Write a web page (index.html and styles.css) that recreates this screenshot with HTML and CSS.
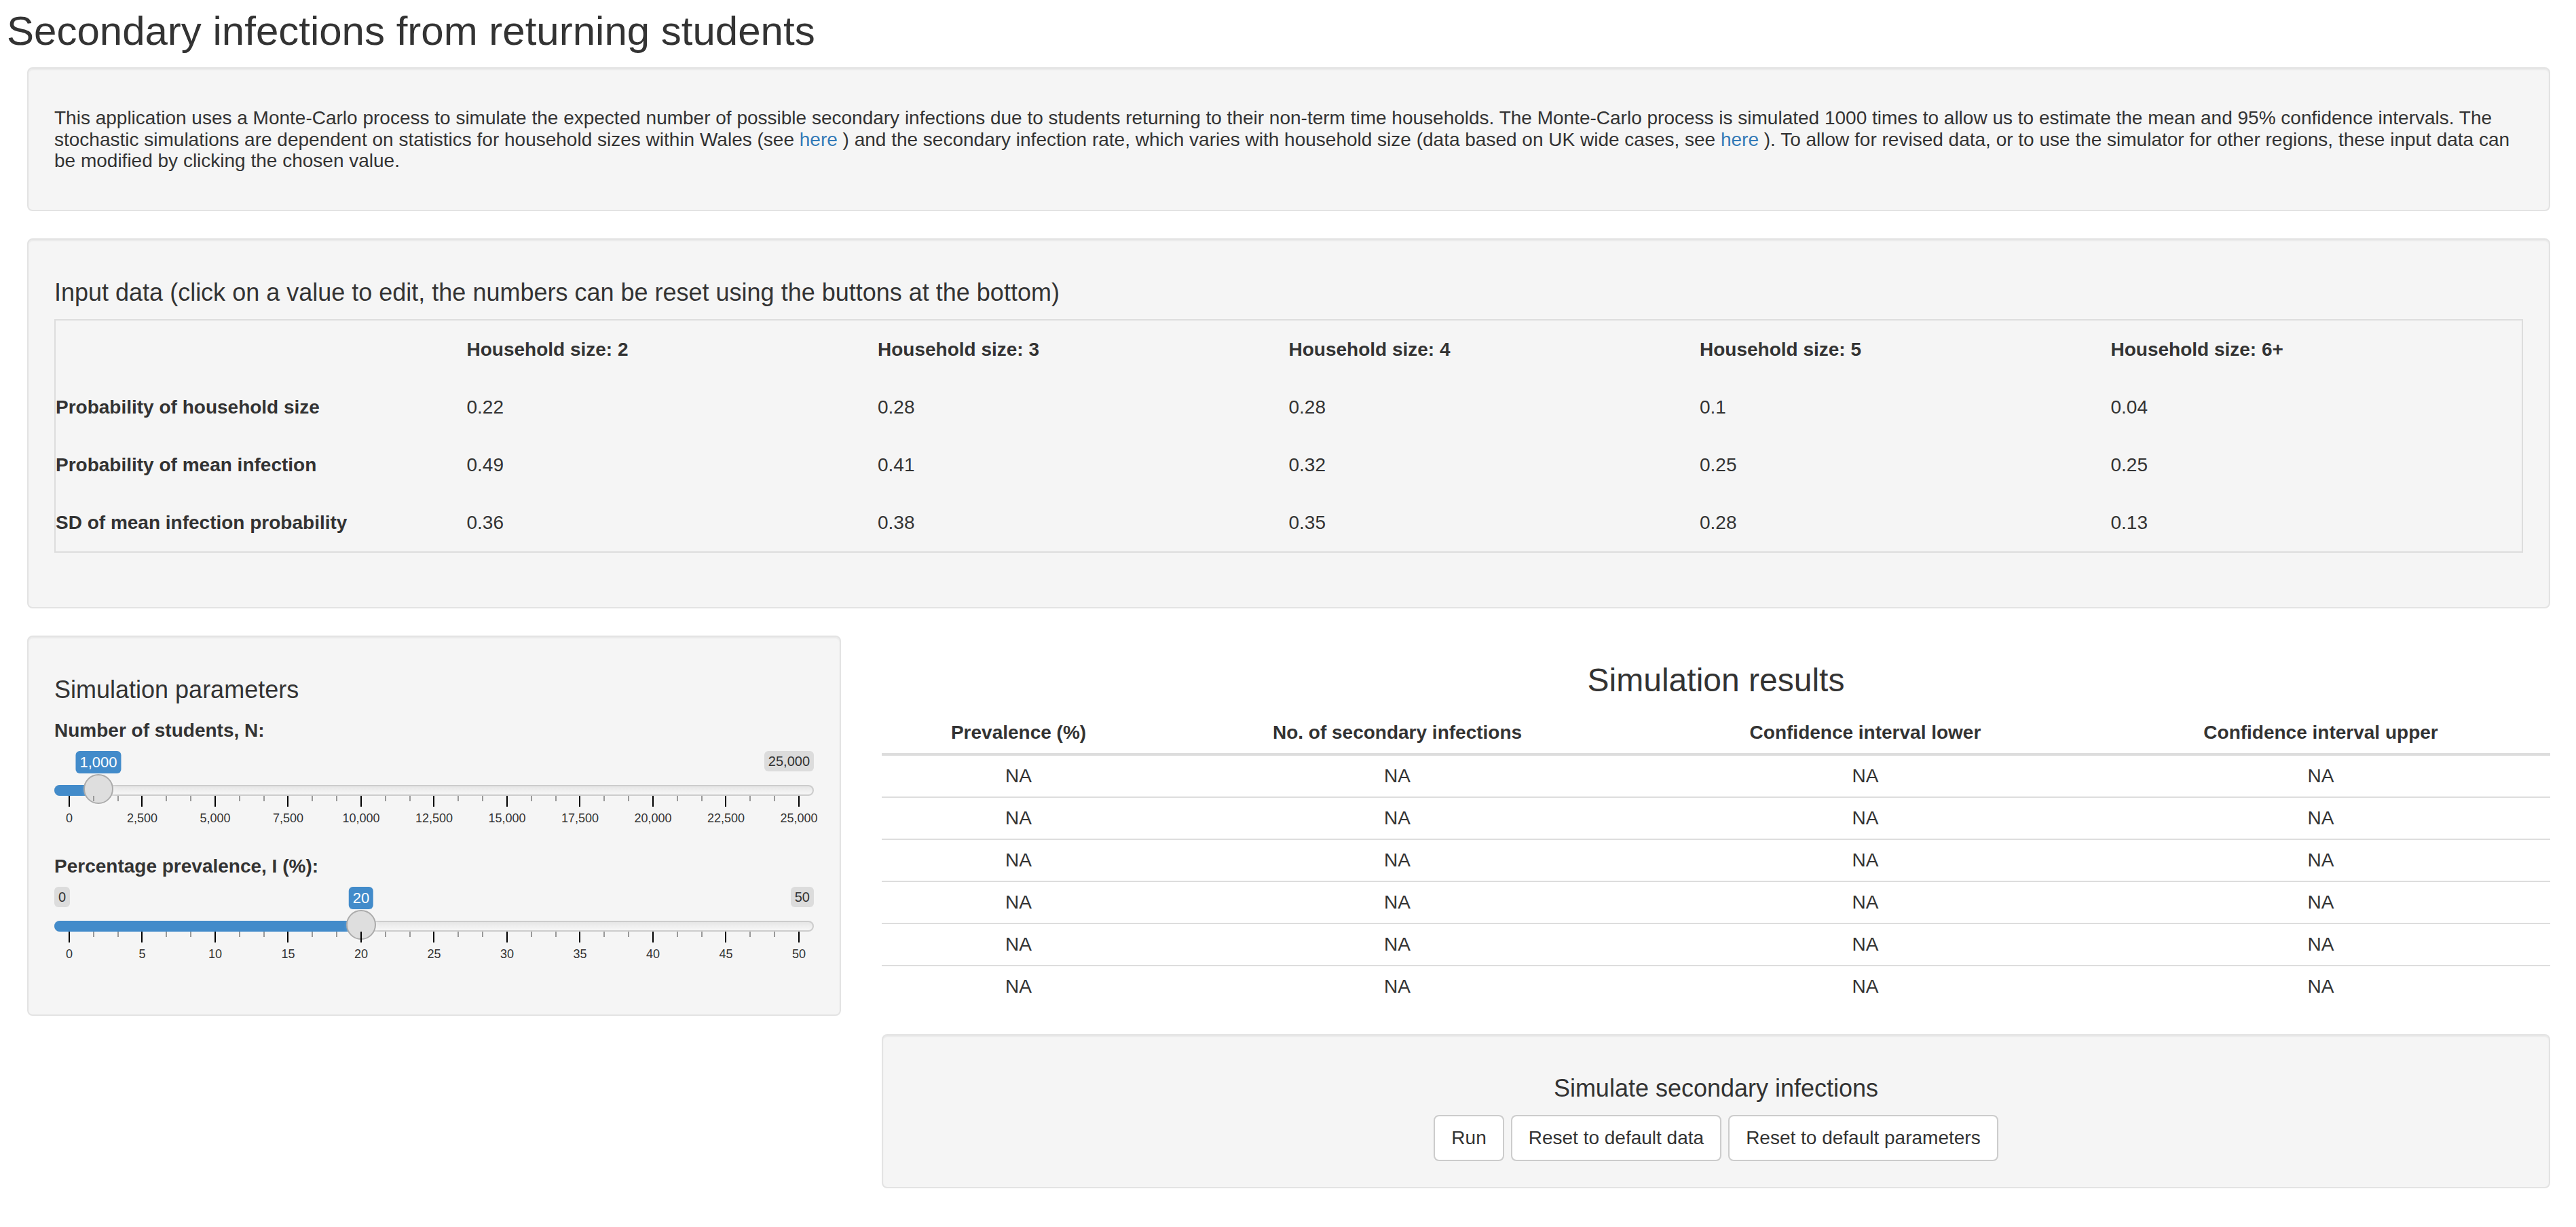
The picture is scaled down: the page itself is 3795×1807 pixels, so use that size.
FILE: index.html
```html
<!DOCTYPE html>
<html lang="en">
<head>
<meta charset="utf-8">
<title>Secondary infections from returning students</title>
<link rel="stylesheet" href="styles.css">
</head>
<body>
<div class="page">
  <h2 class="title">Secondary infections from returning students</h2>
  <div class="full">
    <div class="well">
      <h5 class="intro">This application uses a Monte-Carlo process to simulate the expected number of possible secondary infections due to students returning to their non-term time households. The Monte-Carlo process is simulated 1000 times to allow us to estimate the mean and 95% confidence intervals. The stochastic simulations are dependent on statistics for household sizes within Wales (see <a href="#">here</a> ) and the secondary infection rate, which varies with household size (data based on UK wide cases, see <a href="#">here</a> ). To allow for revised data, or to use the simulator for other regions, these input data can be modified by clicking the chosen value.</h5>
    </div>
    <div class="well">
      <h4>Input data (click on a value to edit, the numbers can be reset using the buttons at the bottom)</h4>
      <table class="input-table">
        <thead>
          <tr><th></th><th>Household size: 2</th><th>Household size: 3</th><th>Household size: 4</th><th>Household size: 5</th><th>Household size: 6+</th></tr>
        </thead>
        <tbody>
          <tr><th>Probability of household size</th><td>0.22</td><td>0.28</td><td>0.28</td><td>0.1</td><td>0.04</td></tr>
          <tr><th>Probability of mean infection</th><td>0.49</td><td>0.41</td><td>0.32</td><td>0.25</td><td>0.25</td></tr>
          <tr><th>SD of mean infection probability</th><td>0.36</td><td>0.38</td><td>0.35</td><td>0.28</td><td>0.13</td></tr>
        </tbody>
      </table>
    </div>
  </div>

  <div class="row">
    <div class="col">
      <div class="well params">
        <h4>Simulation parameters</h4>
        <div class="form-group">
          <label class="control-label">Number of students, N:</label>
          <div class="irs" style="--p:0.04">
            <span class="irs-line"></span>
            <span class="irs-bar"></span>
            <span class="irs-handle"></span>
            <span class="irs-max">25,000</span>
            <span class="irs-single">1,000</span>
            <div class="irs-grid">
              <div class="ticks">
                <span class="t big"></span><span class="t"></span><span class="t"></span>
                <span class="t big"></span><span class="t"></span><span class="t"></span>
                <span class="t big"></span><span class="t"></span><span class="t"></span>
                <span class="t big"></span><span class="t"></span><span class="t"></span>
                <span class="t big"></span><span class="t"></span><span class="t"></span>
                <span class="t big"></span><span class="t"></span><span class="t"></span>
                <span class="t big"></span><span class="t"></span><span class="t"></span>
                <span class="t big"></span><span class="t"></span><span class="t"></span>
                <span class="t big"></span><span class="t"></span><span class="t"></span>
                <span class="t big"></span><span class="t"></span><span class="t"></span>
                <span class="t big"></span>
              </div>
              <div class="gtexts">
                <span class="g">0</span><span class="g">2,500</span><span class="g">5,000</span><span class="g">7,500</span><span class="g">10,000</span><span class="g">12,500</span><span class="g">15,000</span><span class="g">17,500</span><span class="g">20,000</span><span class="g">22,500</span><span class="g">25,000</span>
              </div>
            </div>
          </div>
        </div>
        <div class="form-group">
          <label class="control-label">Percentage prevalence, I (%):</label>
          <div class="irs" style="--p:0.4">
            <span class="irs-line"></span>
            <span class="irs-bar"></span>
            <span class="irs-handle"></span>
            <span class="irs-min">0</span>
            <span class="irs-max">50</span>
            <span class="irs-single">20</span>
            <div class="irs-grid">
              <div class="ticks">
                <span class="t big"></span><span class="t"></span><span class="t"></span>
                <span class="t big"></span><span class="t"></span><span class="t"></span>
                <span class="t big"></span><span class="t"></span><span class="t"></span>
                <span class="t big"></span><span class="t"></span><span class="t"></span>
                <span class="t big"></span><span class="t"></span><span class="t"></span>
                <span class="t big"></span><span class="t"></span><span class="t"></span>
                <span class="t big"></span><span class="t"></span><span class="t"></span>
                <span class="t big"></span><span class="t"></span><span class="t"></span>
                <span class="t big"></span><span class="t"></span><span class="t"></span>
                <span class="t big"></span><span class="t"></span><span class="t"></span>
                <span class="t big"></span>
              </div>
              <div class="gtexts">
                <span class="g">0</span><span class="g">5</span><span class="g">10</span><span class="g">15</span><span class="g">20</span><span class="g">25</span><span class="g">30</span><span class="g">35</span><span class="g">40</span><span class="g">45</span><span class="g">50</span>
              </div>
            </div>
          </div>
        </div>
      </div>
    </div>

    <div class="col">
      <h3 class="center">Simulation results</h3>
      <table class="results">
        <colgroup><col class="c1"><col class="c2"><col class="c3"><col class="c4"></colgroup>
        <thead>
          <tr><th>Prevalence (%)</th><th>No. of secondary infections</th><th>Confidence interval lower</th><th>Confidence interval upper</th></tr>
        </thead>
        <tbody>
          <tr><td>NA</td><td>NA</td><td>NA</td><td>NA</td></tr>
          <tr><td>NA</td><td>NA</td><td>NA</td><td>NA</td></tr>
          <tr><td>NA</td><td>NA</td><td>NA</td><td>NA</td></tr>
          <tr><td>NA</td><td>NA</td><td>NA</td><td>NA</td></tr>
          <tr><td>NA</td><td>NA</td><td>NA</td><td>NA</td></tr>
          <tr><td>NA</td><td>NA</td><td>NA</td><td>NA</td></tr>
        </tbody>
      </table>
      <div class="well center run-well">
        <h4>Simulate secondary infections</h4>
        <div class="btns">
          <button class="btn" type="button">Run</button>
          <button class="btn" type="button">Reset to default data</button>
          <button class="btn" type="button">Reset to default parameters</button>
        </div>
      </div>
    </div>
  </div>
</div>
</body>
</html>
```

FILE: styles.css
```css
* { box-sizing: border-box; }

html, body {
  margin: 0;
  padding: 0;
  background: #fff;
}

body {
  font-family: "Liberation Sans", Arial, Helvetica, sans-serif;
  font-size: 28px;
  line-height: 40px;
  color: #333;
}

a { color: #337ab7; text-decoration: none; }

.page {
  padding: 0 8px 0 10px;
}

h2.title {
  font-size: 60px;
  font-weight: 500;
  line-height: 1.1;
  margin: 13px 0 20px;
}

h3 {
  font-size: 48px;
  font-weight: 500;
  line-height: 1.1;
  margin: 40px 0 20px;
}

h4 {
  font-size: 36px;
  font-weight: 500;
  line-height: 1.1;
  margin: 20px 0;
}

h5.intro {
  font-size: 28px;
  font-weight: 500;
  line-height: 31.5px;
  margin: 19px 0 18px;
}

.center { text-align: center; }

.full {
  padding: 0 30px;
}

.well {
  background-color: #f5f5f5;
  border: 2px solid #e3e3e3;
  border-radius: 8px;
  box-shadow: inset 0 2px 2px rgba(0, 0, 0, 0.05);
  padding: 38px;
  margin-bottom: 40px;
}

/* Input data table */
.input-table {
  width: 100%;
  table-layout: fixed;
  border-collapse: separate;
  border-spacing: 0;
  border: 2px solid #ddd;
  margin-bottom: 42px;
}
.input-table th,
.input-table td {
  height: 85px;
  padding: 0;
  text-align: left;
  vertical-align: middle;
  white-space: nowrap;
}
.input-table th { font-weight: 700; }
.input-table td { font-weight: 400; }

/* bottom row */
.row {
  display: grid;
  grid-template-columns: 1fr 2fr;
}
.col {
  padding: 0 30px;
  min-width: 0;
}

.form-group {
  margin-bottom: 30px;
}
.control-label {
  display: block;
  font-weight: 700;
  margin-bottom: 10px;
}

/* slider */
.irs {
  position: relative;
  height: 120px;
  font-size: 18px;
}
.irs-line {
  position: absolute;
  top: 50px;
  left: 0;
  right: 0;
  height: 16px;
  border: 2px solid #ccc;
  border-radius: 16px;
  background: linear-gradient(to bottom, #dedede -50%, #fff 150%);
}
.irs-bar {
  position: absolute;
  top: 50px;
  left: 0;
  height: 16px;
  width: calc(22px + (100% - 44px) * var(--p));
  background: #428bca;
  border-radius: 16px 0 0 16px;
}
.irs-handle {
  position: absolute;
  top: 34px;
  left: calc((100% - 44px) * var(--p));
  width: 44px;
  height: 44px;
  border: 2px solid #ababab;
  background: #dedede;
  border-radius: 50%;
  box-shadow: 2px 2px 6px rgba(255, 255, 255, 0.3);
}
.irs-min,
.irs-max {
  position: absolute;
  top: 0;
  padding: 2px 6px;
  font-size: 20px;
  line-height: 1.333;
  background: rgba(0, 0, 0, 0.1);
  color: #333;
  border-radius: 6px;
  white-space: nowrap;
}
.irs-min { left: 0; }
.irs-max { right: 0; }
.irs-single {
  position: absolute;
  top: 0;
  left: calc(22px + (100% - 44px) * var(--p));
  transform: translateX(-50%);
  padding: 2px 6px;
  font-size: 22px;
  line-height: 1.333;
  background: #428bca;
  color: #fff;
  border-radius: 6px;
  white-space: nowrap;
}
.irs-grid {
  position: absolute;
  left: 0;
  right: 0;
  bottom: 0;
  height: 54px;
}
.ticks {
  display: flex;
  justify-content: space-between;
  align-items: flex-start;
  padding: 0 21px;
  height: 16px;
}
.t {
  display: block;
  width: 2px;
  height: 8px;
  background: #999;
}
.t.big {
  height: 16px;
  background: #000;
}
.gtexts {
  display: flex;
  justify-content: space-between;
  padding: 0 22px;
  margin-top: 7px;
  line-height: 21px;
  color: #333;
}
.g {
  width: 0;
  display: flex;
  justify-content: center;
  white-space: nowrap;
}

/* results table */
.results {
  width: 100%;
  border-collapse: separate;
  border-spacing: 0;
  margin-bottom: 40px;
}
.results .c1 { width: 16.4%; }
.results .c2 { width: 29%; }
.results .c3 { width: 27.1%; }
.results .c4 { width: 27.5%; }
.results th,
.results td {
  padding: 10px;
  text-align: center;
  line-height: 40px;
  white-space: nowrap;
}
.results th {
  font-weight: 700;
  border-bottom: 4px solid #ddd;
}
.results tbody tr + tr td {
  border-top: 2px solid #ddd;
}

/* buttons */
.run-well {
  margin-bottom: 0;
}
.btns {
  display: flex;
  justify-content: center;
  gap: 10px;
}
.btn {
  font-family: inherit;
  font-size: 28px;
  line-height: 40px;
  padding: 12px 24px;
  color: #333;
  background: #fff;
  border: 2px solid #ccc;
  border-radius: 8px;
  margin: 0;
}
```
